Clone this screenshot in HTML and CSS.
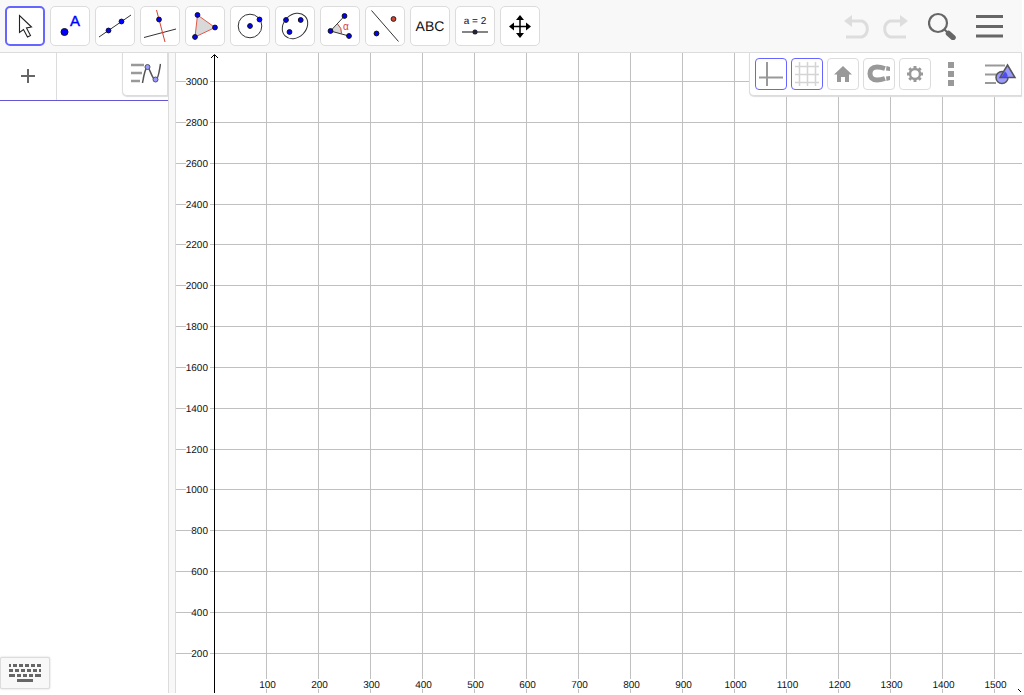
FILE: index.html
```html
<!DOCTYPE html>
<html lang="en">
<head>
    <meta charset="utf-8">
    <title>Graphing</title>
    <link rel="stylesheet" href="styles.css">
</head>
<body>
    <header class="toolbar">
        <div class="tools">
            <button class="tool selected" aria-label="Move">
                <svg viewBox="0 0 40 40"><path d="M14.500 9.500v17l4-3 4 7.500 3-1.500-4-7.500 5-1z" fill="#fff" stroke="#222" stroke-width="1.100"/></svg>
            </button>
            <button class="tool" aria-label="Point">
                <svg viewBox="0 0 40 40"><circle cx="14.500" cy="26" r="3.500" class="pt"/><text x="20" y="20" class="point-name">A</text></svg>
            </button>
            <button class="tool" aria-label="Line">
                <svg viewBox="0 0 40 40"><path d="M4 31L36 9" class="ln"/><circle cx="13.500" cy="24.500" r="2.400" class="pt"/><circle cx="26.500" cy="15.500" r="2.400" class="pt"/></svg>
            </button>
            <button class="tool" aria-label="Perpendicular Line">
                <svg viewBox="0 0 40 40"><path d="M4 31.500L36 23" class="ln"/><path d="M16.500 4l8.500 32" class="ln red"/><circle cx="19" cy="13.500" r="2.400" class="pt"/></svg>
            </button>
            <button class="tool" aria-label="Polygon">
                <svg viewBox="0 0 40 40"><path d="M12.500 9L30 21.500 10 31z" fill="#d9d9d9" stroke="#e0584a"/><circle cx="12.500" cy="9" r="2.400" class="pt"/><circle cx="30" cy="21.500" r="2.400" class="pt"/><circle cx="10" cy="31" r="2.400" class="pt"/></svg>
            </button>
            <button class="tool" aria-label="Circle with Center">
                <svg viewBox="0 0 40 40"><circle cx="20" cy="20" r="11.800" class="ln"/><circle cx="20" cy="20" r="2.400" class="pt"/><circle cx="29.500" cy="13.500" r="2.400" class="pt"/></svg>
            </button>
            <button class="tool" aria-label="Conic through 5 Points">
                <svg viewBox="0 0 40 40"><ellipse cx="20" cy="20" rx="14" ry="11.300" transform="rotate(-45 20 20)" class="ln"/><circle cx="11" cy="14" r="2.400" class="pt"/><circle cx="25.700" cy="14" r="2.400" class="pt"/><circle cx="14.500" cy="26" r="2.400" class="pt"/></svg>
            </button>
            <button class="tool" aria-label="Angle">
                <svg viewBox="0 0 40 40"><path d="M10.500 25l7.500-7q4 4 3.500 10z" fill="#d9d9d9"/><path d="M17.500 18q4.500 4 4 9.500" class="ln red"/><path d="M24.500 10L10.500 25 29 30" class="ln"/><circle cx="24.500" cy="10" r="2.400" class="pt"/><circle cx="10.500" cy="25" r="2.400" class="pt"/><circle cx="29" cy="30" r="2.400" class="pt"/><text x="23" y="24" class="angle-name">α</text></svg>
            </button>
            <button class="tool" aria-label="Reflect about Line">
                <svg viewBox="0 0 40 40"><path d="M6.500 4.500l27 31" class="ln"/><circle cx="28.500" cy="13" r="2.400" fill="#d8412f" stroke="#222"/><circle cx="11.500" cy="27.500" r="2.400" class="pt"/></svg>
            </button>
            <button class="tool tool-text">ABC</button>
            <button class="tool" aria-label="Slider">
                <svg viewBox="0 0 40 40"><text x="20" y="18" class="slider-name">a = 2</text><path d="M7 26h26" stroke="#333" stroke-width="1.200"/><circle cx="20" cy="26" r="2.500" fill="#223"/></svg>
            </button>
            <button class="tool" aria-label="Move Graphics View">
                <svg viewBox="0 0 40 40"><path d="M20 12v17M12 20.500h16" stroke="#000" stroke-width="1.500"/><path d="M20 9l4 5h-8zM20 32l4-5h-8zM9 20.500l5-4v8zM31 20.500l-5-4v8z"/></svg>
            </button>
        </div>
        <div class="actions">
            <button class="action undo" aria-label="Undo" disabled>
                <svg width="28" height="26" viewBox="0 -2 28 26"><path d="M7 6h11a8 8.500 0 0 1 0 16H2" fill="none" stroke="#ddd" stroke-width="3"/><path d="M0 6l8-6v12z" fill="#ddd"/></svg>
            </button>
            <button class="action redo" aria-label="Redo" disabled>
                <svg width="28" height="26" viewBox="0 -2 28 26"><path d="M21 6H10a8 8.500 0 0 0 0 16h16" fill="none" stroke="#ddd" stroke-width="3"/><path d="M28 6l-8-6v12z" fill="#ddd"/></svg>
            </button>
            <button class="action search" aria-label="Search">
                <svg width="28" height="28" viewBox="0 -1 28 28"><circle cx="10" cy="10" r="9" fill="none" stroke="#666" stroke-width="2.200"/><path d="M16.500 16.500l4 4" stroke="#666" stroke-width="2"/><path d="M20.500 20.500l4.500 4" stroke="#666" stroke-width="5.500" stroke-linecap="round"/></svg>
            </button>
            <button class="action" aria-label="Menu">
                <svg width="27" height="24" viewBox="0 0 27 24"><path d="M0 2.500h27M0 12.500h27M0 22h27" stroke="#666" stroke-width="3"/></svg>
            </button>
        </div>
    </header>

    <main class="views">
        <section class="algebra">
            <div class="algebra-row">
                <button class="add" aria-label="Add item">
                    <svg width="14" height="14" viewBox="0 0 14 14"><path d="M7 0v14M0 7h14" stroke="#666" stroke-width="2"/></svg>
                </button>
                <button class="algebra-style" aria-label="Toggle style bar">
                    <svg width="32" height="24" viewBox="-1 1 32 24"><path d="M1 4h13M1 12h11M1 20h9" stroke="#999" stroke-width="2.500"/><path d="M12.500 22C14 13 16 5 18 6.500S22.500 19 25.500 19 29.500 8 30.500 3" fill="none" stroke="#555" stroke-width="1.500"/><circle cx="17.500" cy="6" r="2.500" class="knot"/><circle cx="25.500" cy="18.500" r="2.500" class="knot"/></svg>
                </button>
            </div>
            <button class="keyboard" aria-label="Open keyboard">
                <svg width="32" height="18" viewBox="0 0 32 18"><g stroke="#666" stroke-width="3"><path d="M0 1.500h32" stroke-dasharray="4 2" stroke-dashoffset="2"/><path d="M0 6.500h32" stroke-dasharray="4 2"/><path d="M0 11.500h6M8 11.500h4M14 11.500h4M20 11.500h4M26 11.500h6M8 16.500h16"/></g></svg>
            </button>
        </section>
        <div class="splitter"></div>
        <section class="graphics">
            <svg id="plot" class="plot"></svg>
            <div class="stylebar">
                <button class="style-button on" aria-label="Show axes">
                    <svg viewBox="0 0 32 32"><path d="M12 4v24M4 19.500h24" stroke="#999" stroke-width="2"/></svg>
                </button>
                <button class="style-button on" aria-label="Show grid">
                    <svg viewBox="0 0 32 32"><path d="M8.500 4v24M16.500 4v24M24.500 4v24M4 8.500h24M4 16.500h24M4 24.500h24" stroke="#d4d4d4" stroke-width="1.500"/></svg>
                </button>
                <button class="style-button" aria-label="Standard view">
                    <svg viewBox="0 0 32 32"><path d="M16 8l9 8.500h-3V24h-4v-5h-4v5h-4v-7.500H7z" fill="#999"/></svg>
                </button>
                <button class="style-button" aria-label="Point capturing">
                    <svg viewBox="0 0 32 32"><path d="M22 10.500c-3-1-5-1.500-8-1.500-5 0-7 3-7 6.500s2 6.500 7 6.500c3 0 5-.5 8-1.500" fill="none" stroke="#999" stroke-width="5"/><path d="M23.500 8l3.500 1v4l-4-.5zM23 18.500l4-.5v4l-3.500 1z" fill="#999"/></svg>
                </button>
                <button class="style-button" aria-label="Settings">
                    <svg viewBox="0 0 32 32"><circle cx="16" cy="16" r="5" fill="none" stroke="#999" stroke-width="2.500"/><path d="M16 8v3M16 21v3M8 16h3M21 16h3M10.300 10.300l2.200 2.200M19.500 19.500l2.200 2.200M10.300 21.700l2.200-2.200M19.500 12.500l2.200-2.200" stroke="#999" stroke-width="3"/></svg>
                </button>
                <button class="style-button plain" aria-label="More">
                    <svg viewBox="0 0 32 32"><path d="M13 4h6v6h-6zM13 13h6v6h-6zM13 22h6v6h-6z" fill="#999"/></svg>
                </button>
                <button class="toggle-style" aria-label="Toggle style bar">
                    <svg width="32" height="22" viewBox="0 0 32 22"><path d="M0 2.500h20M0 11.500h13M0 20h11" stroke="#999" stroke-width="2"/><circle cx="17" cy="14.500" r="6" class="shape"/><path d="M22.500 2l7.500 12.500H15z" class="shape"/><path d="M20 8.500q3 2.500 2.500 5.500h-6z" fill="#4d4df0"/></svg>
                </button>
            </div>
        </section>
    </main>

    <script>
        const plot = document.getElementById('plot');

        // Screen position of the y axis and pixel distance between grid lines
        const axisX = 38;
        const stepX = 52;
        const stepY = 40.82;

        function line(x1, y1, x2, y2, cls) {
            return `<line x1="${x1}" y1="${y1}" x2="${x2}" y2="${y2}" class="${cls}"/>`;
        }

        function drawPlot() {
            const width = plot.clientWidth;
            const height = plot.clientHeight;
            const originY = height + 0.95;
            let grid = '';
            let labels = '';

            for (let i = 1; axisX + i * stepX < width; i++) {
                const x = axisX + i * stepX + 0.5;
                const text = String(i * 100);
                const w = text.length * 6;
                grid += line(x, 0, x, height, 'grid-line');
                labels += `<rect x="${x + 1 - w / 2}" y="${height - 14}" width="${w}" height="10" fill="#fff"/>`;
                labels += `<text x="${x + 1}" y="${height - 5}" text-anchor="middle">${text}</text>`;
            }

            for (let i = 1; originY - i * stepY > 10; i++) {
                const y = Math.floor(originY - i * stepY) + 0.5;
                const text = String(i * 200);
                const w = text.length * 6;
                grid += line(0, y, width, y, 'grid-line');
                labels += `<rect x="${34 - w}" y="${y - 5}" width="${w}" height="10" fill="#fff"/>`;
                labels += `<text x="32" y="${y + 3}" text-anchor="end">${text}</text>`;
            }

            // Vertical axis with its arrow, and the tip of the horizontal one
            const axes = line(axisX + 0.5, 2, axisX + 0.5, height, 'axis')
                + `<path d="M${axisX - 3} 5l3.500-3.500 3.500 3.500" class="arrow"/>`
                + `<path d="M${width - 4} ${height - 4}l3 3" class="arrow"/>`;

            plot.innerHTML = grid + labels + axes;
        }

        drawPlot();
        window.addEventListener('resize', drawPlot);
    </script>
</body>
</html>
```
FILE: styles.css
```css
* {
    box-sizing: border-box;
}
body {
    margin: 0;
    height: 100vh;
    padding: 0 2px 2px 0;
    display: flex;
    flex-direction: column;
    background: #fff;
    font-family: "Liberation Sans", Arial, sans-serif;
    overflow: hidden;
}
button {
    padding: 0;
    border: none;
    background: none;
    font-family: inherit;
    cursor: pointer;
}
svg {
    display: block;
}

/* Top toolbar */
.toolbar {
    display: flex;
    justify-content: space-between;
    align-items: center;
    padding: 6px 19px 6px 5px;
    background: #f8f8f8;
    border-bottom: 1px solid #dcdcdc;
}
.tools {
    display: flex;
    gap: 5px;
}
.tool {
    width: 40px;
    height: 40px;
    background: #fff;
    border: 1px solid #dcdcdc;
    border-radius: 5px;
}
.tool svg {
    width: 40px;
    height: 40px;
    margin: -1px;
}
.tool.selected {
    border: 2px solid #6666ff;
}
.tool.selected svg {
    margin: -2px;
}
.tool-text {
    font-size: 14px;
    color: #111;
    text-rendering: geometricPrecision;
}
.pt {
    fill: #00f;
    stroke: #111;
    stroke-width: 1;
}
.ln {
    fill: none;
    stroke: #333;
    stroke-width: 1;
}
.ln.red {
    stroke: #d8412f;
}
.point-name {
    font: 15px "Liberation Sans", sans-serif;
    fill: #00f;
    stroke: #00f;
    stroke-width: 0.4px;
}
.angle-name {
    font: 10px "Liberation Sans", sans-serif;
    fill: #d8412f;
}
.slider-name {
    font: 10px "Liberation Sans", sans-serif;
    fill: #111;
    text-anchor: middle;
    text-rendering: geometricPrecision;
}
.actions {
    display: flex;
    align-items: center;
}
.undo {
    margin-right: 8px;
}
.redo {
    margin-right: 20px;
}
.search {
    margin-right: 20px;
}

/* Algebra view */
.views {
    flex: 1;
    display: flex;
    min-height: 0;
}
.algebra {
    width: 168px;
    display: flex;
    flex-direction: column;
    justify-content: space-between;
    align-items: flex-start;
    padding-bottom: 4px;
}
.algebra-row {
    width: 100%;
    height: 48px;
    display: flex;
    justify-content: space-between;
    align-items: flex-start;
    border-bottom: 1px solid #6557d2;
}
.add {
    width: 57px;
    height: 47px;
    display: flex;
    justify-content: center;
    align-items: center;
    padding-bottom: 1px;
    border-right: 1px solid #dcdcdc;
}
.algebra-style {
    width: 46px;
    height: 43px;
    display: flex;
    justify-content: center;
    align-items: center;
    background: #fff;
    border: 1px solid #dcdcdc;
    border-top: none;
    border-radius: 0 0 0 5px;
    box-shadow: 0 1px 1px #ddd;
}
.knot {
    fill: #99f;
    stroke: #555;
}
.keyboard {
    width: 50px;
    height: 32px;
    display: flex;
    justify-content: center;
    align-items: center;
    background: #f8f8f8;
    border: 1px solid #dcdcdc;
    border-radius: 2px;
    box-shadow: 0 0 2px #ccc;
}
.splitter {
    width: 8px;
    background: #f8f8f8;
    border-left: 1px solid #dcdcdc;
    border-right: 1px solid #dcdcdc;
}

/* Graphics view */
.graphics {
    flex: 1;
    position: relative;
    min-width: 0;
}
.plot {
    width: 100%;
    height: 100%;
    font-size: 10px;
    fill: #111;
    text-rendering: geometricPrecision;
}
.grid-line {
    stroke: #c0c0c0;
    shape-rendering: crispEdges;
}
.axis {
    stroke: #000;
    shape-rendering: crispEdges;
}
.arrow {
    fill: none;
    stroke: #000;
}
.stylebar {
    position: absolute;
    top: 0;
    right: 0;
    height: 43px;
    display: flex;
    align-items: center;
    gap: 4px;
    padding: 0 4px 0 5px;
    background: #fff;
    border: 1px solid #dcdcdc;
    border-top: none;
    border-radius: 0 0 0 5px;
    box-shadow: 0 1px 1px #ddd;
}
.style-button {
    width: 32px;
    height: 32px;
    background: #fff;
    border: 1px solid #dcdcdc;
    border-radius: 4px;
}
.style-button svg {
    width: 32px;
    height: 32px;
    margin: -1px;
}
.style-button.on {
    border-color: #6666ff;
}
.style-button.plain {
    border-color: transparent;
}
.toggle-style {
    margin-left: 14px;
}
.shape {
    fill: #99f;
    stroke: #555;
    stroke-width: 1.5;
}
```
